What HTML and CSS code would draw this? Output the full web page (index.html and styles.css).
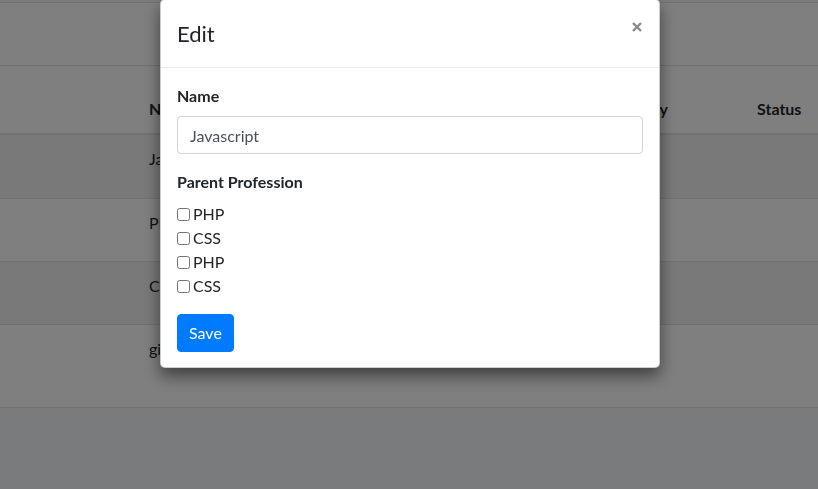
FILE: index.html
```html
<!DOCTYPE html>
<html lang="en">
<head>
<meta charset="utf-8">
<title>Edit</title>
<link rel="stylesheet" href="styles.css">
</head>
<body>
<div class="page">
  <div class="page-top"></div>
  <div class="card-head"></div>
  <div class="trow thead">
    <div class="cell"></div>
    <div class="cell">Name</div>
    <div class="cell">Category</div>
    <div class="cell">Status</div>
  </div>
  <div class="trow striped r1">
    <div class="cell"></div>
    <div class="cell">Javascript</div>
    <div class="cell"></div>
    <div class="cell"></div>
  </div>
  <div class="trow r2">
    <div class="cell"></div>
    <div class="cell">PHP</div>
    <div class="cell"></div>
    <div class="cell"></div>
  </div>
  <div class="trow striped r3">
    <div class="cell"></div>
    <div class="cell">CSS</div>
    <div class="cell"></div>
    <div class="cell"></div>
  </div>
  <div class="trow r4">
    <div class="cell"></div>
    <div class="cell">git</div>
    <div class="cell"></div>
    <div class="cell"></div>
  </div>
</div>

<div class="backdrop">
  <div class="modal">
    <div class="modal-header">
      <h5 class="modal-title">Edit</h5>
      <button class="close" type="button" aria-label="Close">
        <svg width="10" height="10" viewBox="0 0 10 10"><path d="M1 1L9 9M9 1L1 9" stroke="#8a8a8a" stroke-width="2.4" stroke-linecap="butt" fill="none"/></svg>
      </button>
    </div>
    <div class="modal-body">
      <div class="form-group">
        <label class="lbl">Name</label>
        <input class="form-control" type="text" value="Javascript">
      </div>
      <div class="form-group">
        <label class="lbl">Parent Profession</label>
        <div class="checks">
          <label class="chk"><input type="checkbox">PHP</label>
          <label class="chk"><input type="checkbox">CSS</label>
          <label class="chk"><input type="checkbox">PHP</label>
          <label class="chk"><input type="checkbox">CSS</label>
        </div>
      </div>
      <button class="btn" type="button">Save</button>
    </div>
  </div>
</div>
</body>
</html>
```

FILE: styles.css
```css
* { box-sizing: border-box; }
html, body { margin: 0; padding: 0; }
body {
  font-family: "Lato", "Liberation Sans", sans-serif;
  font-size: 16px;
  line-height: 1.5;
  color: #212529;
  background: #f4f6f9;
  overflow: hidden;
}
.page { width: 818px; }
.page-top {
  height: 3px;
  border-bottom: 1px solid #dee2e6;
}
.card-head {
  height: 63px;
  background: #fff;
  border-bottom: 1px solid #dee2e6;
}
.trow {
  display: grid;
  grid-template-columns: 137px 454px 154px 73px;
  background: #fff;
  border-bottom: 1px solid #dee2e6;
}
.trow.striped { background: #f2f2f2; }
.cell { padding: 12px; white-space: nowrap; }
.thead {
  height: 69px;
  border-bottom: 2px solid #dee2e6;
  font-weight: 700;
  align-items: end;
}
.thead .cell { padding-bottom: 12px; }
.r1 { height: 64px; }
.r2 { height: 63px; }
.r3 { height: 63px; }
.r4 { height: 83px; }

.backdrop {
  position: fixed;
  inset: 0;
  background: rgba(0, 0, 0, 0.5);
}
.modal {
  width: 500px;
  margin: -1px 0 0 160px;
  background: #fff;
  border: 1px solid rgba(0, 0, 0, 0.2);
  border-radius: 5px;
  box-shadow: 0 8px 16px rgba(0, 0, 0, 0.5);
}
.modal-header {
  display: flex;
  justify-content: space-between;
  align-items: flex-start;
  padding: 16px;
  border-bottom: 1px solid #e9ecef;
}
.modal-title {
  margin: 0;
  font-size: 22px;
  font-weight: 400;
  line-height: 35px;
}
.close {
  border: 0;
  background: none;
  padding: 0;
  margin: 6px 1px 0 0;
  width: 10px;
  height: 10px;
  display: flex;
}
.modal-body { padding: 16px 16px 15px; }
.form-group { margin-bottom: 16px; }
.lbl {
  display: block;
  font-weight: 700;
  margin-bottom: 8px;
}
.form-control {
  display: block;
  width: 100%;
  height: 38px;
  padding: 6px 12px;
  font-family: inherit;
  font-size: 16px;
  color: #495057;
  border: 1px solid #ced4da;
  border-radius: 4px;
  background: #fff;
}
.checks { display: flex; flex-direction: column; }
.chk {
  display: flex;
  align-items: center;
  height: 24px;
  color: #212529;
}
.chk input {
  margin: 0 3px 0 0;
  width: 13px;
  height: 13px;
}
.btn {
  font-family: inherit;
  font-size: 16px;
  line-height: 24px;
  padding: 6px 11px;
  color: #fff;
  background: #007bff;
  border: 1px solid #007bff;
  border-radius: 4px;
}
```
